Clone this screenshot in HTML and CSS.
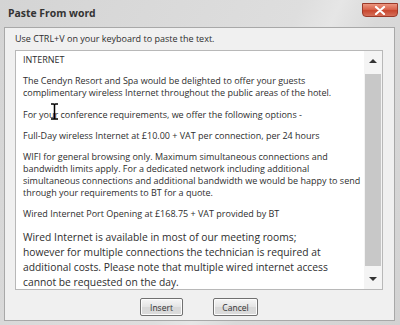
FILE: index.html
```html
<!DOCTYPE html>
<html lang="en">
<head>
    <meta charset="UTF-8">
    <meta name="viewport" content="width=device-width, initial-scale=1.0">
    <title>Paste From word</title>
    <link rel="stylesheet" href="styles.css">
</head>
<body>
    <div class="window">
        <div class="titlebar">
            <span class="title">Paste From word</span>
            <button class="close" title="Close">
                <svg width="12" height="9" viewBox="0 0 12 9"><path d="M2 1 L10 8 M10 1 L2 8" stroke="#fff" stroke-width="2.2" stroke-linecap="round"/></svg>
            </button>
        </div>
        <div class="panel">
            <div class="hint">Use CTRL+V on your keyboard to paste the text.</div>
            <div class="editor">
                <div class="content">
                    <p>INTERNET</p>
                    <p>The Cendyn Resort and Spa would be delighted to offer your guests<br>complimentary wireless Internet throughout the public areas of the hotel.</p>
                    <p>For your conference requirements, we offer the following options -</p>
                    <p>Full-Day wireless Internet at £10.00 + VAT per connection, per 24 hours</p>
                    <p>WIFI for general browsing only. Maximum simultaneous connections and<br>bandwidth limits apply. For a dedicated network including additional<br>simultaneous connections and additional bandwidth we would be happy to send<br>through your requirements to BT for a quote.</p>
                    <p>Wired Internet Port Opening at £168.75 + VAT provided by BT</p>
                    <p class="big">Wired Internet is available in most of our meeting rooms;<br>however for multiple connections the technician is required at<br>additional costs. Please note that multiple wired internet access<br>cannot be requested on the day.</p>
                    <svg class="ibeam" width="9" height="17" viewBox="0 0 9 17"><path d="M1 1 H3.5 Q4.5 1 4.5 2.5 Q4.5 1 5.5 1 H8 M1 16 H3.5 Q4.5 16 4.5 14.5 Q4.5 16 5.5 16 H8 M4.5 2.5 V14.5" stroke="#000" stroke-width="1.5" fill="none"/></svg>
                </div>
                <div class="scrollbar">
                    <div class="arrow up"></div>
                    <div class="thumb"></div>
                    <div class="arrow down"></div>
                </div>
            </div>
            <div class="buttons">
                <button class="btn">Insert</button>
                <button class="btn">Cancel</button>
            </div>
        </div>
    </div>
</body>
</html>
```

FILE: styles.css
```css
:root {
    --panel: #f0f0f0;
    --border: #a8a8a8;
    --text: #2e2e2e;
}
html, body {
    margin: 0;
    height: 100%;
}
body {
    width: 400px;
    height: 325px;
    overflow: hidden;
    background: linear-gradient(115deg, #d4d4d4 0%, #dedede 55%, #e6e6e6 62%, #d9d9d9 70%, #d2d2d2 100%);
    font-family: "Open Sans", "Liberation Sans", sans-serif;
    color: var(--text);
}
.window {
    height: 100%;
    display: flex;
    flex-direction: column;
    padding: 0 5px 4px 4px;
    box-sizing: border-box;
}
.titlebar {
    height: 27px;
    flex: none;
    display: flex;
    align-items: flex-start;
    justify-content: space-between;
}
.title {
    margin: 6px 0 0 4px;
    font-size: 10.4px;
    font-weight: bold;
    color: #333;
}
.close {
    margin: 3px -3px 0 0;
    width: 36px;
    height: 14px;
    padding: 0;
    border: 1px solid #9b3a2a;
    border-radius: 0 0 4px 4px;
    background: linear-gradient(#eb967f, #d9644c 45%, #c8472f 55%, #d5705a);
    display: flex;
    align-items: center;
    justify-content: center;
}
.panel {
    flex: 1;
    background: var(--panel);
    border: 1px solid var(--border);
    display: flex;
    flex-direction: column;
    padding: 0 11px 0 10px;
}
.hint {
    font-size: 9px;
    margin: 5px 0 0;
    height: 17px;
    line-height: 12px;
}
.editor {
    height: 238px;
    display: flex;
    background: #fff;
    border: 1px solid #b8b8b8;
}
.content {
    flex: 1;
    position: relative;
    padding: 3px 4px 3px 7px;
    font-size: 9px;
    line-height: 11.8px;
    white-space: nowrap;
    overflow: hidden;
}
.content p {
    margin: 0 0 9.6px;
}
.content .big {
    font-size: 10.3px;
    line-height: 15.3px;
    margin-top: 8px;
}
.ibeam {
    position: absolute;
    left: 34px;
    top: 52px;
}
.scrollbar {
    width: 18px;
    display: flex;
    flex-direction: column;
    background: #f4f4f4;
}
.arrow {
    height: 23px;
    position: relative;
}
.arrow::after {
    content: "";
    position: absolute;
    left: 5px;
    border-left: 4px solid transparent;
    border-right: 4px solid transparent;
}
.up::after {
    top: 8px;
    border-bottom: 4px solid #333;
}
.down::after {
    top: 11px;
    border-top: 4px solid #333;
}
.thumb {
    flex: 1;
    margin: 0 1px;
    background: #c8c8c8;
}
.buttons {
    display: flex;
    justify-content: center;
    gap: 30px;
    margin-top: 8px;
}
.btn {
    height: 18px;
    padding: 0;
    font-family: "Open Sans", "Liberation Sans", sans-serif;
    font-size: 8.5px;
    color: #333;
    background: linear-gradient(#f6f6f6, #e4e4e4 50%, #d8d8d8 51%, #dcdcdc);
    border: 1px solid #707070;
    border-radius: 2px;
    box-shadow: inset 0 0 0 1px #fcfcfc;
}
.btn:first-child { width: 43px; }
.btn:last-child { width: 45px; }
```
